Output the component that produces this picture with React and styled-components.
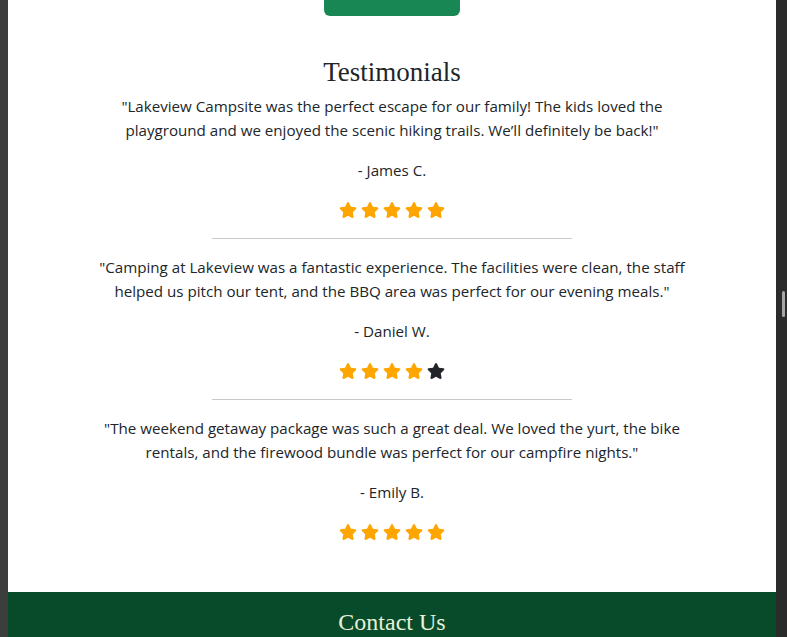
import React from "react";
import styled, { createGlobalStyle } from "styled-components";
import { FaStar } from "react-icons/fa";

const testimonials = [
  {
    quote:
      "\"Lakeview Campsite was the perfect escape for our family! The kids loved the playground and we enjoyed the scenic hiking trails. We\u2019ll definitely be back!\"",
    name: "- James C.",
    rating: 5,
  },
  {
    quote:
      "\"Camping at Lakeview was a fantastic experience. The facilities were clean, the staff helped us pitch our tent, and the BBQ area was perfect for our evening meals.\"",
    name: "- Daniel W.",
    rating: 4,
  },
  {
    quote:
      "\"The weekend getaway package was such a great deal. We loved the yurt, the bike rentals, and the firewood bundle was perfect for our campfire nights.\"",
    name: "- Emily B.",
    rating: 5,
  },
];

export default function App() {
  return (
    <>
      <GlobalStyle />
      <Frame>
        <LeftEdge />
        <Page>
          <Main>
            <BookButton />
            <Heading>Testimonials</Heading>
            <List>
              {testimonials.map((t, i) => (
                <React.Fragment key={t.name}>
                  {i > 0 && <Divider />}
                  <Card>
                    <Quote>{t.quote}</Quote>
                    <Name>{t.name}</Name>
                    <Stars>
                      {[0, 1, 2, 3, 4].map((n) => (
                        <Star key={n} $on={n < t.rating} />
                      ))}
                    </Stars>
                  </Card>
                </React.Fragment>
              ))}
            </List>
          </Main>
          <Footer>
            <FooterTitle>Contact Us</FooterTitle>
          </Footer>
        </Page>
        <ScrollTrack>
          <Thumb />
        </ScrollTrack>
      </Frame>
    </>
  );
}

const GlobalStyle = createGlobalStyle`
  html, body { margin: 0; padding: 0; }
  body {
    font-family: "Open Sans", "Noto Sans", sans-serif;
    color: #212529;
    background: #fff;
  }
`;

const Frame = styled.div`
  display: flex;
  height: 100vh;
  overflow: hidden;
`;

const LeftEdge = styled.div`
  width: 8px;
  flex-shrink: 0;
  background: #3d3d3d;
`;

const ScrollTrack = styled.div`
  width: 11px;
  flex-shrink: 0;
  background: #2b2b2b;
  display: flex;
  flex-direction: column;
  align-items: flex-end;
  padding: 291px 2px 0 0;
  box-sizing: border-box;
`;

const Thumb = styled.div`
  width: 3px;
  height: 26px;
  border-radius: 2px;
  background: #a6a6a6;
`;

const Page = styled.div`
  flex: 1;
  display: flex;
  flex-direction: column;
  background: #fff;
`;

const Main = styled.section`
  display: flex;
  flex-direction: column;
  align-items: center;
  padding-bottom: 48px;
`;

const BookButton = styled.div`
  width: 136px;
  height: 16px;
  background: #198754;
  border-radius: 0 0 6px 6px;
`;

const Heading = styled.h2`
  margin: 40px 0 6px;
  font-family: "Liberation Serif", serif;
  font-weight: 400;
  font-size: 27px;
  line-height: 32px;
  color: #212529;
`;

const List = styled.div`
  width: 600px;
  display: flex;
  flex-direction: column;
  align-items: center;
`;

const Card = styled.div`
  display: flex;
  flex-direction: column;
  align-items: center;
  text-align: center;
`;

const Quote = styled.p`
  margin: 0 0 16px;
  font-size: 15.15px;
  line-height: 24px;
`;

const Name = styled.p`
  margin: 0 0 16px;
  font-size: 15.15px;
  line-height: 24px;
`;

const Stars = styled.div`
  display: flex;
  gap: 4px;
  height: 24px;
  align-items: center;
`;

const Star = styled(FaStar)`
  width: 18px;
  height: 18px;
  color: ${(p) => (p.$on ? "#ffa500" : "#212529")};
`;

const Divider = styled.hr`
  width: 360px;
  margin: 16px 0;
  border: 0;
  border-top: 1px solid #c8c8c8;
`;

const Footer = styled.footer`
  flex: 1;
  background: #084b2a;
  display: flex;
  justify-content: center;
  padding-top: 16px;
`;

const FooterTitle = styled.h2`
  margin: 0;
  font-family: "Liberation Serif", serif;
  font-weight: 400;
  font-size: 24px;
  line-height: 28px;
  color: #e6f2d8;
`;
